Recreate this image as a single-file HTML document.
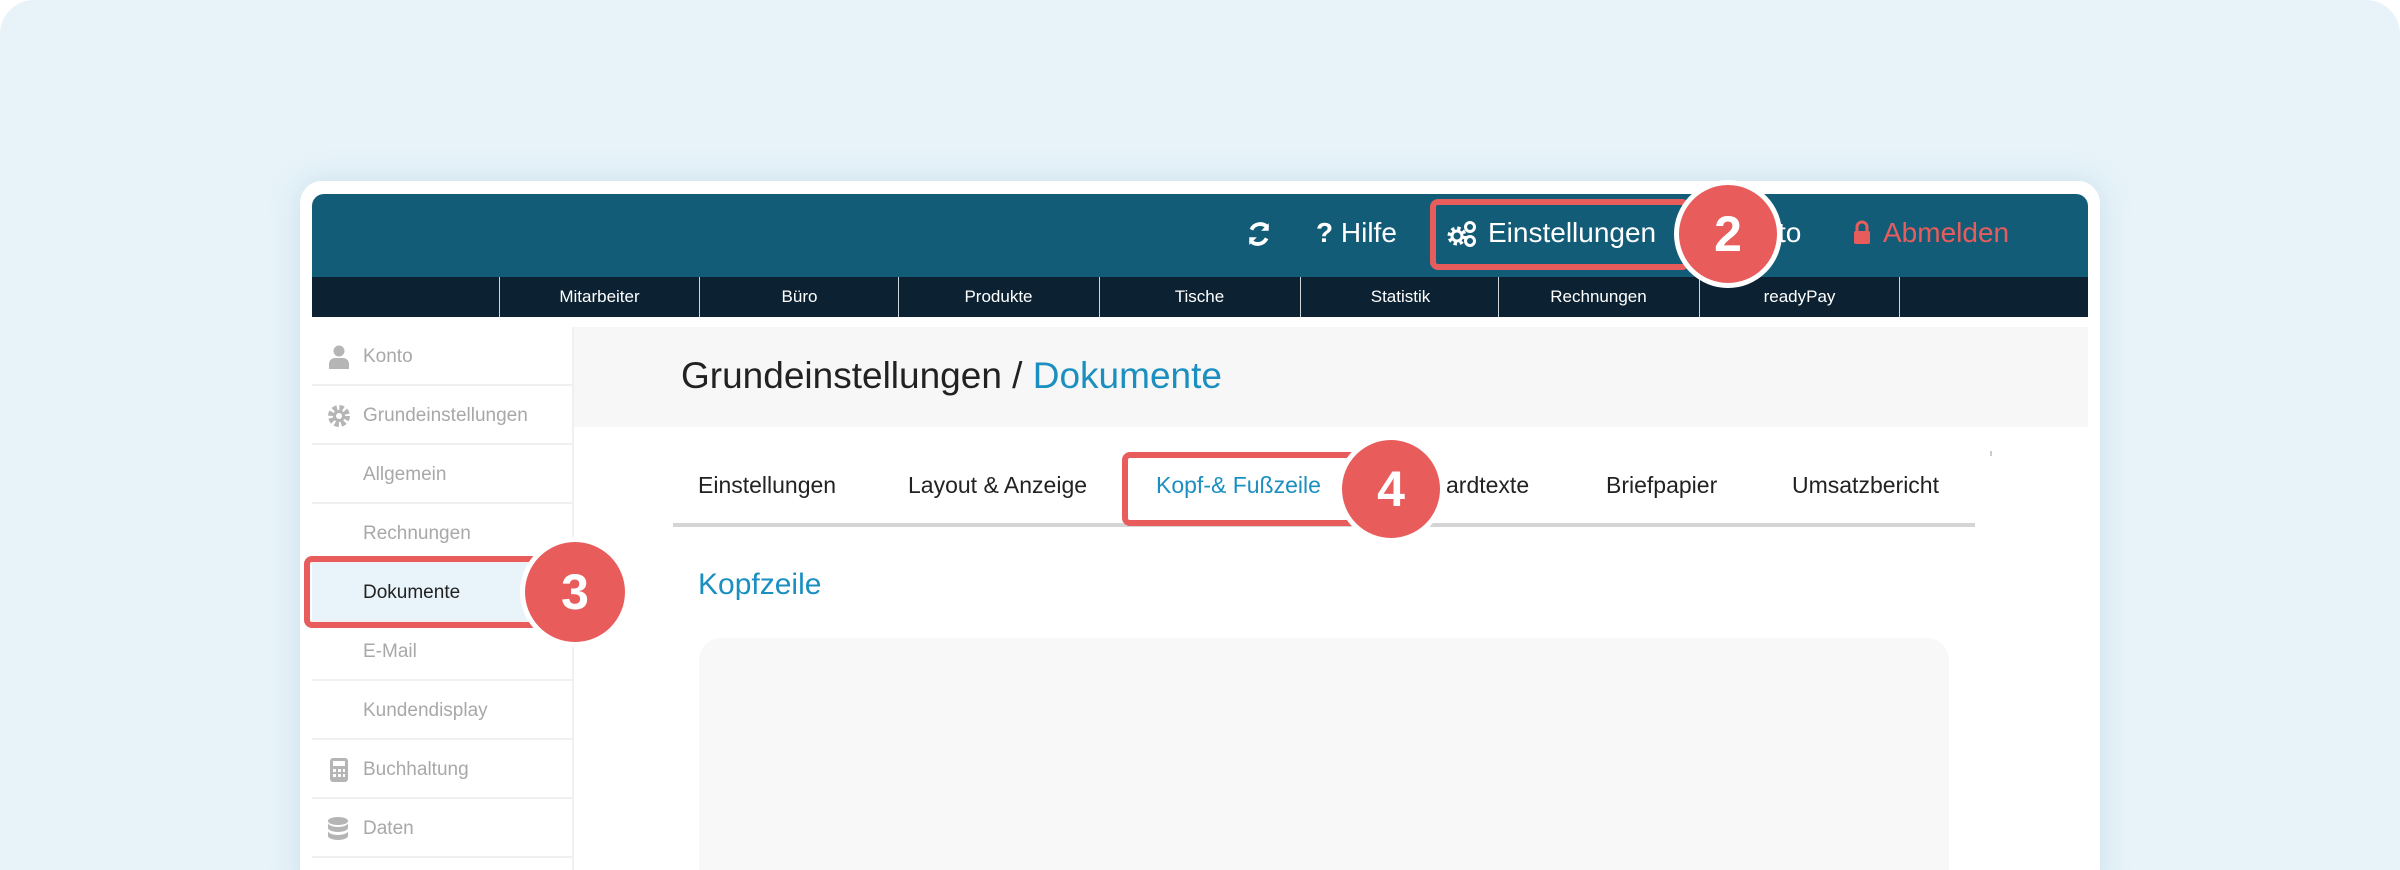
<!DOCTYPE html>
<html style="width:2400px;height:870px;overflow:hidden"><head><meta charset="utf-8"><style>
*{box-sizing:border-box;margin:0;padding:0}
body{width:2400px;height:870px;overflow:hidden;background:#fff;font-family:"Liberation Sans",sans-serif;position:relative}
.wrap{position:absolute;left:0;top:0;width:2400px;height:870px;overflow:hidden}
.bg{position:absolute;left:0;top:0;width:2400px;height:870px;background:#e7f3f9;border-radius:34px 34px 0 0}
.card{position:absolute;left:300px;top:181px;width:1800px;height:720px;background:#fff;border-radius:22px;box-shadow:0 0 30px rgba(120,170,200,.25)}
.hdr{position:absolute;left:312px;top:194px;width:1776px;height:83px;background:#125c78;border-radius:12px 12px 0 0}
.nav{position:absolute;left:312px;top:277px;width:1776px;height:40px;background:#0c2232}
.nav div{position:absolute;top:0;height:40px;width:200px;border-left:1.5px solid #cfd6da;color:#fff;font-size:17px;line-height:40px;text-align:center}
.t{position:absolute;white-space:nowrap}
.side{position:absolute;left:312px;top:327px;width:262px;height:560px;border-right:2px solid #f0f0f0}
.si{position:absolute;left:0;width:262px;height:59px;border-bottom:2px solid #f0f0f0;color:#a8a8a8;font-size:19px;line-height:59px;padding-left:51px}
.circ{position:absolute;border-radius:50%;background:#e85c5c;border:5px solid #fff;color:#fff;font-weight:bold;text-align:center}
.box{position:absolute;border:6px solid #e85c5c;border-radius:8px}
.tab{position:absolute;top:472px;font-size:23px;color:#222}
</style></head><body><div class="wrap">
<div class="bg"></div>
<div class="card"></div>
<div class="hdr"></div>
<div class="nav">
<div style="left:187px">Mitarbeiter</div><div style="left:387px">Büro</div><div style="left:586px">Produkte</div><div style="left:787px">Tische</div><div style="left:988px">Statistik</div><div style="left:1186px">Rechnungen</div><div style="left:1387px">readyPay</div><div style="left:1587px;width:10px"></div>
</div>
<svg class="t" style="left:1246px;top:221px" width="26" height="26" viewBox="0 0 24 24"><path d="M20 6a9 9 0 0 0-15 2" stroke="#fff" stroke-width="3.5" fill="none"/><path d="M21 2v7h-7z" fill="#fff"/><path d="M4 18a9 9 0 0 0 15-2" stroke="#fff" stroke-width="3.5" fill="none"/><path d="M3 22v-7h7z" fill="#fff"/></svg>
<div class="t" style="left:1316px;top:217px;font-size:28px;color:#fff"><b>?</b> Hilfe</div>
<svg class="t" style="left:1446px;top:219px" width="32" height="30" viewBox="0 0 32 30"><circle cx="11" cy="17" r="7" fill="none" stroke="#fff" stroke-width="5" stroke-dasharray="3 2.5"/><circle cx="11" cy="17" r="5" fill="none" stroke="#fff" stroke-width="3"/><circle cx="24" cy="8" r="4.5" fill="none" stroke="#fff" stroke-width="3"/><circle cx="24" cy="22" r="4.5" fill="none" stroke="#fff" stroke-width="3"/></svg>
<div class="t" style="left:1488px;top:217px;font-size:28px;color:#fff">Einstellungen</div>
<div class="box" style="left:1430px;top:199px;width:260px;height:71px"></div>
<div class="t" style="left:1778px;top:217px;font-size:28px;color:#fff">to</div>
<svg class="t" style="left:1852px;top:220px" width="20" height="26" viewBox="0 0 20 26"><path d="M5 11V7a5 5 0 0 1 10 0v4" stroke="#e85c5c" stroke-width="3" fill="none"/><rect x="2" y="11" width="16" height="13" rx="2" fill="#e85c5c"/></svg>
<div class="t" style="left:1883px;top:217px;font-size:28px;color:#e85c5c">Abmelden</div>
<div class="circ" style="left:1674px;top:180px;width:108px;height:108px;font-size:50px;line-height:98px">2</div>
<div class="side">
<div class="si" style="top:0">Konto</div>
<div class="si" style="top:59px">Grundeinstellungen</div>
<div class="si" style="top:118px">Allgemein</div>
<div class="si" style="top:177px">Rechnungen</div>
<div class="si" style="top:236px;background:#e8f3fa;color:#222">Dokumente</div>
<div class="si" style="top:295px">E-Mail</div>
<div class="si" style="top:354px">Kundendisplay</div>
<div class="si" style="top:413px">Buchhaltung</div>
<div class="si" style="top:472px">Daten</div>
</div>
<svg class="t" style="left:328px;top:345px" width="22" height="24" viewBox="0 0 22 24"><circle cx="11" cy="6" r="5.5" fill="#b5b5b5"/><path d="M1 24v-5a6 6 0 0 1 6-6h8a6 6 0 0 1 6 6v5z" fill="#b5b5b5"/></svg>
<svg class="t" style="left:327px;top:404px" width="24" height="24" viewBox="0 0 24 24"><circle cx="12" cy="12" r="8" fill="none" stroke="#b5b5b5" stroke-width="6" stroke-dasharray="4 2.3"/><circle cx="12" cy="12" r="6" fill="#b5b5b5"/><circle cx="12" cy="12" r="3" fill="#fff"/></svg>
<svg class="t" style="left:330px;top:758px" width="18" height="24" viewBox="0 0 18 24"><rect width="18" height="24" rx="3" fill="#b5b5b5"/><rect x="3" y="3" width="12" height="5" fill="#fff"/><g fill="#fff"><rect x="3" y="11" width="3" height="3"/><rect x="8" y="11" width="3" height="3"/><rect x="13" y="11" width="2" height="3"/><rect x="3" y="16" width="3" height="3"/><rect x="8" y="16" width="3" height="3"/><rect x="13" y="16" width="2" height="3"/></g></svg>
<svg class="t" style="left:327px;top:816px" width="22" height="26" viewBox="0 0 22 26"><ellipse cx="11" cy="5" rx="10" ry="4" fill="#b5b5b5"/><path d="M1 7v5c0 2 4.5 4 10 4s10-2 10-4V7c0 2-4.5 4-10 4S1 9 1 7z" fill="#b5b5b5"/><path d="M1 15v5c0 2 4.5 4 10 4s10-2 10-4v-5c0 2-4.5 4-10 4S1 17 1 15z" fill="#b5b5b5"/></svg>
<div class="box" style="left:304px;top:556px;width:262px;height:72px"></div>
<div class="circ" style="left:520px;top:537px;width:110px;height:110px;font-size:50px;line-height:100px">3</div>
<div class="t" style="left:574px;top:327px;width:1514px;height:100px;background:#f7f7f7"></div>
<div class="t" style="left:681px;top:355px;font-size:37px;color:#222">Grundeinstellungen / <span style="color:#1a8fc0">Dokumente</span></div>
<div class="tab" style="left:698px">Einstellungen</div>
<div class="tab" style="left:908px">Layout &amp; Anzeige</div>
<div class="tab" style="left:1156px;color:#1a8fc0">Kopf-&amp; Fußzeile</div>
<div class="tab" style="left:1446px">ardtexte</div>
<div class="tab" style="left:1606px">Briefpapier</div>
<div class="tab" style="left:1792px">Umsatzbericht</div>
<div class="t" style="left:673px;top:523px;width:1302px;height:4px;background:#d5d5d5"></div>
<div class="t" style="left:1990px;top:451px;width:2px;height:5px;background:#ccc"></div>
<div class="box" style="left:1122px;top:452px;width:240px;height:74px"></div>
<div class="circ" style="left:1337px;top:435px;width:108px;height:108px;font-size:50px;line-height:98px">4</div>
<div class="t" style="left:698px;top:568px;font-size:30px;color:#1a8fc0">Kopfzeile</div>
<div class="t" style="left:699px;top:638px;width:1250px;height:260px;background:#f8f8f8;border-radius:22px"></div>
</div></body></html>
